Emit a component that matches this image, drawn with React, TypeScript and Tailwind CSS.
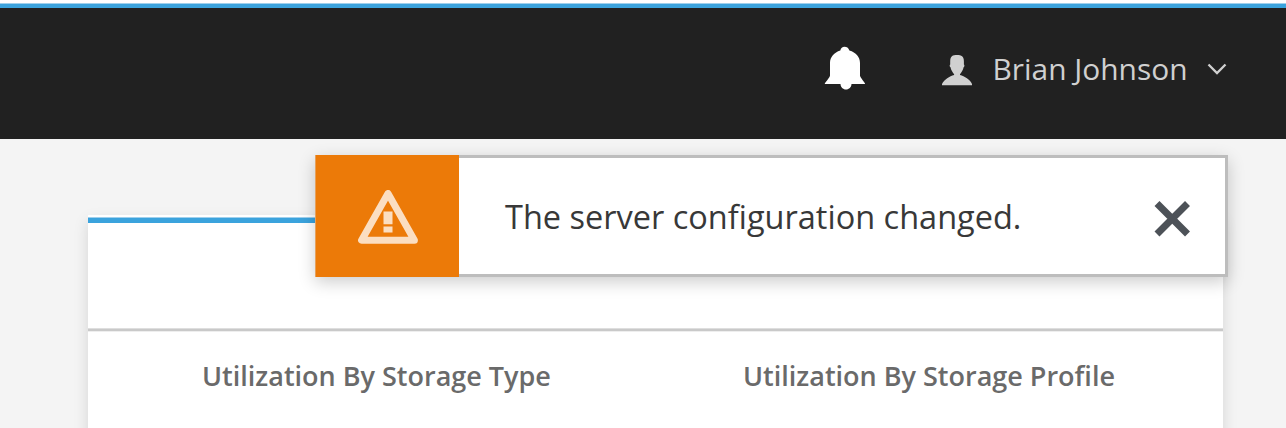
function TopBar() {
  return (
    <header className="h-[139px] bg-[#212121]">
      <div className="h-[3px] bg-white" />
      <div className="h-px bg-[#9fd0ed]" />
      <div className="h-1 bg-[#3ba3dd]" />
      <div className="flex h-[121px] items-center justify-end pr-[59px]">
        <button aria-label="Notifications" className="mr-[76px]">
          <svg width="42" height="44" viewBox="0 0 42 44" fill="#fff" className="-mt-px block">
            <path d="M16.300 4.500C17 1.800 18.300.7 20.500.7s3.900 1 4.900 3.800C32 6.500 36 11 36 17V29.500c0 1.800 4.200 6.200 5 8V38H27.500c0 3-2.500 5.500-5.500 5.500S16.500 41 16.500 38H.8v-.5C1.800 35.700 6 31.300 6 29.500V17C6 11 10.200 6.500 16.300 4.500Z" />
          </svg>
        </button>
        <div className="flex items-center text-[#d0d0d0]">
          <svg width="30" height="31" viewBox="0 0 30 31" fill="currentColor" className="mt-[3px] block">
            <path d="M10.200 1C11 .3 13 0 15 0s4.200.3 5.100 1.200C21.500 2.400 21.900 4 21.900 6.500v2.900c.8.300.7 2.300-.3 2.900-.4 2.600-2.200 5-3.600 7v.8C22.500 21.300 28 24.500 30 29v1.300H0V29c2.500-4.500 7.500-7.700 12.100-8.900v-.8c-1.400-2-3.200-4.400-3.600-7-1-.6-1.100-2.600-.3-2.900V6.500C8.200 4 8.600 2.200 10.200 1Z" />
          </svg>
          <span className="ml-[20.500px] w-[195.500px] text-[29.900px] leading-10 whitespace-nowrap">Brian Johnson</span>
          <svg width="20" height="12" viewBox="0 0 20 12" fill="none" stroke="currentColor" strokeWidth="2.3" className="ml-[19px] block">
            <path d="m1.500 1.500 8.500 8.500 8.500-8.500" />
          </svg>
        </div>
      </div>
    </header>
  );
}

function Toast() {
  return (
    <div
      role="alert"
      className="absolute top-[155px] left-[315px] flex h-[122px] w-[913px] shadow-[0_5px_16px_rgba(0,0,0,0.2)]"
    >
      <div className="flex w-36 items-center justify-center border-l border-[#e6a15c] bg-[#ec7a08]">
        <svg width="60" height="55" viewBox="0 0 60 55" className="mt-0.5 ml-px block">
          <path d="M30 3.500 3.600 50.200h52.800Z" fill="none" stroke="#fbdec1" strokeWidth="7" strokeLinejoin="round" />
          <path d="M25.500 21.500h9V34.300h-9zM25.500 36.500h9v6h-9z" fill="#fbdec1" />
        </svg>
      </div>
      <div className="flex flex-1 items-center justify-between border-[3px] border-l-0 border-[#bdbdbd] bg-white pr-[34px] pl-[46px]">
        <p className="mt-0.5 text-[32.5px] leading-10 whitespace-nowrap text-[#383838]">The server configuration changed.</p>
        <button aria-label="Close" className="mt-1.5">
          <svg width="37" height="36" viewBox="0 0 37 36" stroke="#4d5258" strokeWidth="7" className="block">
            <path d="m3 2.500 30.500 30.500M33.500 2.500 3 33" />
          </svg>
        </button>
      </div>
    </div>
  );
}

export default function App() {
  return (
    <div className="relative h-[428px] w-[1286px] overflow-hidden bg-[#f4f4f4] font-['Open_Sans',sans-serif]">
      <TopBar />
      <main className="pt-[76px] pl-[88px]">
        <section className="h-[300px] w-[1135px] bg-white shadow-[0_6px_14px_rgba(0,0,0,0.13)]">
          <div className="h-0.5" />
          <div className="h-1.5 border-t border-[#9fd0ed] bg-[#3ba3dd]" />
          <div className="h-[105px]" />
          <div className="h-1 border-y border-t-[#dedede] border-b-[#eeeeee] bg-[#c9c9c9]" />
          <div className="flex pt-[24px] pl-[114px] text-[27px] leading-10 font-semibold whitespace-nowrap text-[#6a6a6a]">
            <h2 className="w-[541px]">Utilization By Storage Type</h2>
            <h2>Utilization By Storage Profile</h2>
          </div>
        </section>
      </main>
      <Toast />
    </div>
  );
}
